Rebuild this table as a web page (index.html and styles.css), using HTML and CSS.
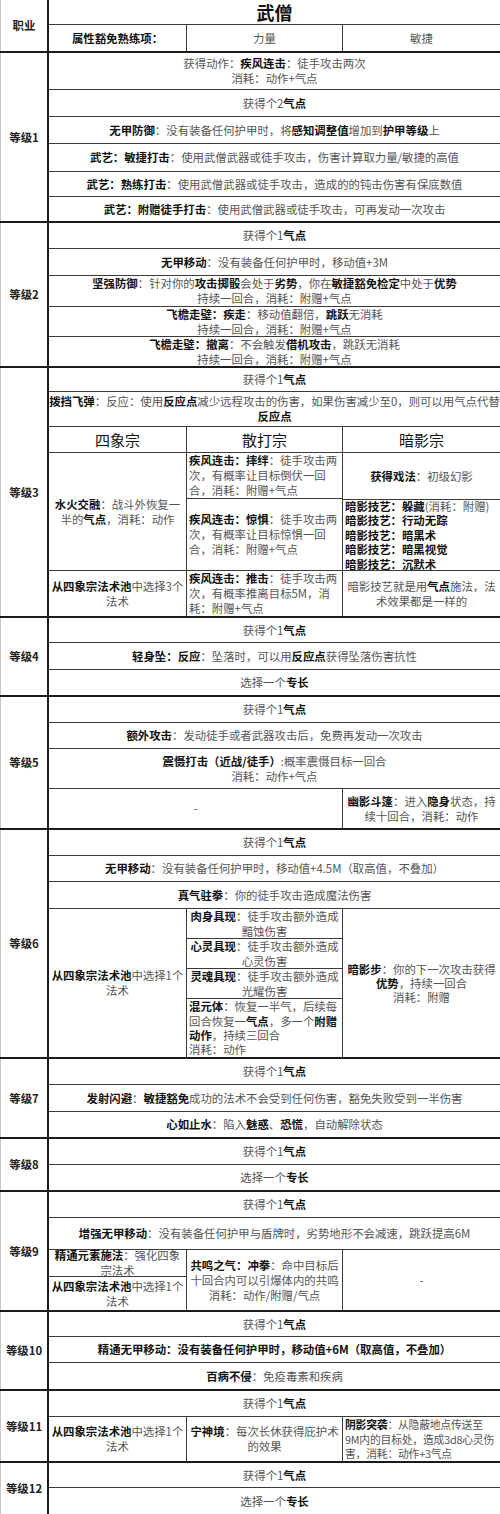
FILE: index.html
```html
<!DOCTYPE html>
<html lang="zh-CN">
<head>
<meta charset="utf-8">
<title>武僧</title>
<link rel="stylesheet" href="styles.css">
</head>
<body>
<div class="sheet">

  <section class="level">
    <div class="lab">职业</div>
    <div class="body">
      <div class="row h25 title"><p>武僧</p></div>
      <div class="row split h26">
        <div class="col c1"><div class="cell grow"><p><b>属性豁免熟练项：</b></p></div></div>
        <div class="col c2"><div class="cell grow"><p>力量</p></div></div>
        <div class="col c3"><div class="cell grow"><p>敏捷</p></div></div>
      </div>
    </div>
  </section>

  <section class="level">
    <div class="lab">等级1</div>
    <div class="body">
      <div class="row h37"><p>获得动作：<b>疾风连击</b>：徒手攻击两次<br>消耗：动作+气点</p></div>
      <div class="row h27"><p>获得个2<b>气点</b></p></div>
      <div class="row h27"><p><b>无甲防御</b>：没有装备任何护甲时，将<b>感知调整值</b>增加到<b>护甲等级</b>上</p></div>
      <div class="row h28"><p><b>武艺：敏捷打击</b>：使用武僧武器或徒手攻击，伤害计算取力量/敏捷的高值</p></div>
      <div class="row h25"><p><b>武艺：熟练打击</b>：使用武僧武器或徒手攻击，造成的的钝击伤害有保底数值</p></div>
      <div class="row h24"><p><b>武艺：附赠徒手打击</b>：使用武僧武器或徒手攻击，可再发动一次攻击</p></div>
    </div>
  </section>

  <section class="level">
    <div class="lab">等级2</div>
    <div class="body">
      <div class="row h26"><p>获得个1<b>气点</b></p></div>
      <div class="row h27"><p><b>无甲移动</b>：没有装备任何护甲时，移动值+3M</p></div>
      <div class="row h31"><p><b>坚强防御</b>：针对你的<b>攻击掷骰</b>会处于<b>劣势</b>，你在<b>敏捷豁免检定</b>中处于<b>优势</b><br>持续一回合，消耗：附赠+气点</p></div>
      <div class="row h30"><p><b>飞檐走壁：疾走</b>：移动值翻倍，<b>跳跃</b>无消耗<br>持续一回合，消耗：附赠+气点</p></div>
      <div class="row h29"><p><b>飞檐走壁：撤离</b>：不会触发<b>借机攻击</b>，跳跃无消耗<br>持续一回合，消耗：附赠+气点</p></div>
    </div>
  </section>

  <section class="level">
    <div class="lab">等级3</div>
    <div class="body">
      <div class="row h24"><p>获得个1<b>气点</b></p></div>
      <div class="row h35"><p><b>拨挡飞弹</b>：反应：使用<b>反应点</b>减少远程攻击的伤害，如果伤害减少至0，则可以用气点代替<br><b>反应点</b></p></div>
      <div class="row split h26 zong">
        <div class="col c1"><div class="cell grow"><p>四象宗</p></div></div>
        <div class="col c2"><div class="cell grow"><p>散打宗</p></div></div>
        <div class="col c3"><div class="cell grow"><p>暗影宗</p></div></div>
      </div>
      <div class="row split h163">
        <div class="col c1">
          <div class="cell h118"><p><b>水火交融</b>：战斗外恢复一<br>半的<b>气点</b>，消耗：动作</p></div>
          <div class="cell grow"><p><b>从四象宗法术池</b>中选择3个<br>法术</p></div>
        </div>
        <div class="col c2">
          <div class="cell left h46"><p><b>疾风连击：摔绊</b>：徒手攻击两<br>次，有概率让目标倒伏一回<br>合，消耗：附赠+气点</p></div>
          <div class="cell left h72"><p><b>疾风连击：惊惧</b>：徒手攻击两<br>次，有概率让目标惊惧一回<br>合，消耗：附赠+气点</p></div>
          <div class="cell left grow"><p><b>疾风连击：推击</b>：徒手攻击两<br>次，有概率推离目标5M，消<br>耗：附赠+气点</p></div>
        </div>
        <div class="col c3">
          <div class="cell h47"><p><b>获得戏法</b>：初级幻影</p></div>
          <div class="cell left h71"><p class="tight"><b>暗影技艺：躲藏</b>(消耗：附赠)<br><b>暗影技艺：行动无踪</b><br><b>暗影技艺：暗黑术</b><br><b>暗影技艺：暗黑视觉</b><br><b>暗影技艺：沉默术</b></p></div>
          <div class="cell grow"><p>暗影技艺就是用<b>气点</b>施法，法<br>术效果都是一样的</p></div>
        </div>
      </div>
    </div>
  </section>

  <section class="level">
    <div class="lab">等级4</div>
    <div class="body">
      <div class="row h25"><p>获得个1<b>气点</b></p></div>
      <div class="row h27"><p><b>轻身坠：反应</b>：坠落时，可以用<b>反应点</b>获得坠落伤害抗性</p></div>
      <div class="row h25"><p>选择一个<b>专长</b></p></div>
    </div>
  </section>

  <section class="level">
    <div class="lab">等级5</div>
    <div class="body">
      <div class="row h26"><p>获得个1<b>气点</b></p></div>
      <div class="row h26"><p><b>额外攻击</b>：发动徒手或者武器攻击后，免费再发动一次攻击</p></div>
      <div class="row h40"><p><b>震慑打击（近战/徒手）</b>:概率震慑目标一回合<br>消耗：动作+气点</p></div>
      <div class="row split h39">
        <div class="col c12"><div class="cell grow"><p>-</p></div></div>
        <div class="col c3"><div class="cell grow"><p><b>幽影斗篷</b>：进入<b>隐身</b>状态，持<br>续十回合，消耗：动作</p></div></div>
      </div>
    </div>
  </section>

  <section class="level">
    <div class="lab">等级6</div>
    <div class="body">
      <div class="row h26"><p>获得个1<b>气点</b></p></div>
      <div class="row h26"><p><b>无甲移动</b>：没有装备任何护甲时，移动值+4.5M（取高值，不叠加）</p></div>
      <div class="row h27"><p><b>真气驻拳</b>：你的徒手攻击造成魔法伤害</p></div>
      <div class="row split h148">
        <div class="col c1"><div class="cell grow"><p><b>从四象宗法术池</b>中选择1个<br>法术</p></div></div>
        <div class="col c2 box">
          <div class="cell h30"><p><b>肉身具现</b>：徒手攻击额外造成<br>黯蚀伤害</p></div>
          <div class="cell h30"><p><b>心灵具现</b>：徒手攻击额外造成<br>心灵伤害</p></div>
          <div class="cell h30"><p><b>灵魂具现</b>：徒手攻击额外造成<br>光耀伤害</p></div>
          <div class="cell left grow"><p class="tight"><b>混元体</b>：恢复一半气，后续每<br>回合恢复一<b>气点</b>，多一个<b>附赠</b><br><b>动作</b>，持续三回合<br>消耗：动作</p></div>
        </div>
        <div class="col c3"><div class="cell grow"><p class="loose"><b>暗影步</b>：你的下一次攻击获得<br><b>优势</b>，持续一回合<br>消耗：附赠</p></div></div>
      </div>
    </div>
  </section>

  <section class="level">
    <div class="lab">等级7</div>
    <div class="body">
      <div class="row h26"><p>获得个1<b>气点</b></p></div>
      <div class="row h27"><p><b>发射闪避</b>：<b>敏捷豁免</b>成功的法术不会受到任何伤害，豁免失败受到一半伤害</p></div>
      <div class="row h25"><p><b>心如止水</b>：陷入<b>魅惑</b>、<b>恐慌</b>，自动解除状态</p></div>
    </div>
  </section>

  <section class="level">
    <div class="lab">等级8</div>
    <div class="body">
      <div class="row h26"><p>获得个1<b>气点</b></p></div>
      <div class="row h25"><p>选择一个<b>专长</b></p></div>
    </div>
  </section>

  <section class="level">
    <div class="lab">等级9</div>
    <div class="body">
      <div class="row h26"><p>获得个1<b>气点</b></p></div>
      <div class="row h32"><p><b>增强无甲移动</b>：没有装备任何护甲与盾牌时，劣势地形不会减速，跳跃提高6M</p></div>
      <div class="row split h60">
        <div class="col c1">
          <div class="cell h27"><p><b>精通元素施法</b>：强化四象<br>宗法术</p></div>
          <div class="cell grow"><p><b>从四象宗法术池</b>中选择1个<br>法术</p></div>
        </div>
        <div class="col c2"><div class="cell grow"><p><b>共鸣之气：冲拳</b>：命中目标后<br>十回合内可以引爆体内的共鸣<br>消耗：动作/附赠/气点</p></div></div>
        <div class="col c3"><div class="cell grow"><p>-</p></div></div>
      </div>
    </div>
  </section>

  <section class="level">
    <div class="lab">等级10</div>
    <div class="body">
      <div class="row h25"><p>获得个1<b>气点</b></p></div>
      <div class="row h26"><p><b>精通无甲移动：没有装备任何护甲时，移动值+6M（取高值，不叠加）</b></p></div>
      <div class="row h26"><p><b>百病不侵</b>：免疫毒素和疾病</p></div>
    </div>
  </section>

  <section class="level">
    <div class="lab">等级11</div>
    <div class="body">
      <div class="row h26"><p>获得个1<b>气点</b></p></div>
      <div class="row split h44">
        <div class="col c1"><div class="cell grow"><p><b>从四象宗法术池</b>中选择1个<br>法术</p></div></div>
        <div class="col c2"><div class="cell grow"><p><b>宁神境</b>：每次长休获得庇护术<br>的效果</p></div></div>
        <div class="col c3"><div class="cell left grow"><p class="tight narrow"><b>阴影突袭</b>：从隐蔽地点传送至<br>9M内的目标处，造成3d8心灵伤<br>害，消耗：动作+3气点</p></div></div>
      </div>
    </div>
  </section>

  <section class="level last">
    <div class="lab">等级12</div>
    <div class="body">
      <div class="row h25"><p>获得个1<b>气点</b></p></div>
      <div class="row h26"><p>选择一个<b>专长</b></p></div>
    </div>
  </section>

</div>
</body>
</html>
```

FILE: styles.css
```css
* {
  box-sizing: border-box;
  margin: 0;
  padding: 0;
}

html, body {
  background: #ffffff;
}

body {
  width: 500px;
  font-family: "Noto Sans CJK SC", "Noto Sans", sans-serif;
  font-size: 11.4px;
  line-height: 15px;
  color: #555555;
}

b {
  font-weight: 700;
  color: #111111;
}

.sheet {
  display: flex;
  flex-direction: column;
  width: 500px;
}

.level {
  display: flex;
  border-bottom: 2px solid #1a1a1a;
}

.level.last {
  border-bottom: none;
}

.lab {
  width: 49px;
  flex: none;
  border-left: 1px solid #c8c8c8;
  border-right: 2px solid #1a1a1a;
  display: flex;
  align-items: center;
  justify-content: center;
  font-weight: 700;
  color: #222222;
}

.body {
  flex: 1;
  min-width: 0;
  display: flex;
  flex-direction: column;
}

.row {
  flex: none;
  display: flex;
  align-items: center;
  justify-content: center;
  text-align: center;
  white-space: nowrap;
  border-bottom: 1px solid #3a3a3a;
}

.body > .row:last-child {
  border-bottom: none;
}

.row.split {
  align-items: stretch;
  justify-content: flex-start;
}

.title {
  font-size: 18px;
  font-weight: 700;
  color: #111111;
}

.zong {
  font-size: 15px;
  color: #111111;
}

.col {
  display: flex;
  flex-direction: column;
  flex: none;
}

.c1 {
  width: 138px;
  border-right: 1px solid #3a3a3a;
}

.c2 {
  width: 156px;
  border-right: 1px solid #3a3a3a;
}

.c3 {
  width: 157px;
}

.c12 {
  width: 294px;
  border-right: 1px solid #3a3a3a;
}

.cell {
  flex: none;
  display: flex;
  align-items: center;
  justify-content: center;
  text-align: center;
  white-space: nowrap;
}

.col > .cell:not(:last-child) {
  border-bottom: 1px solid #3a3a3a;
}

.cell.grow {
  flex: 1;
}

.cell.left {
  justify-content: flex-start;
  text-align: left;
  padding-left: 2px;
}

.tight {
  line-height: 14.4px;
}

.loose {
  line-height: 14px;
}

.narrow {
  font-size: 10.8px;
  letter-spacing: -0.2px;
}

.h24 { height: 24px; }
.h25 { height: 25px; }
.h26 { height: 26px; }
.h27 { height: 27px; }
.h28 { height: 28px; }
.h29 { height: 29px; }
.h30 { height: 30px; }
.h31 { height: 31px; }
.h32 { height: 32px; }
.h35 { height: 35px; }
.h37 { height: 37px; }
.h39 { height: 39px; }
.h40 { height: 40px; }
.h44 { height: 44px; }
.h46 { height: 46px; }
.h47 { height: 47px; }
.h60 { height: 60px; }
.h71 { height: 71px; }
.h72 { height: 72px; }
.h118 { height: 118px; }
.h148 { height: 148px; }
.h163 { height: 163px; }
```
